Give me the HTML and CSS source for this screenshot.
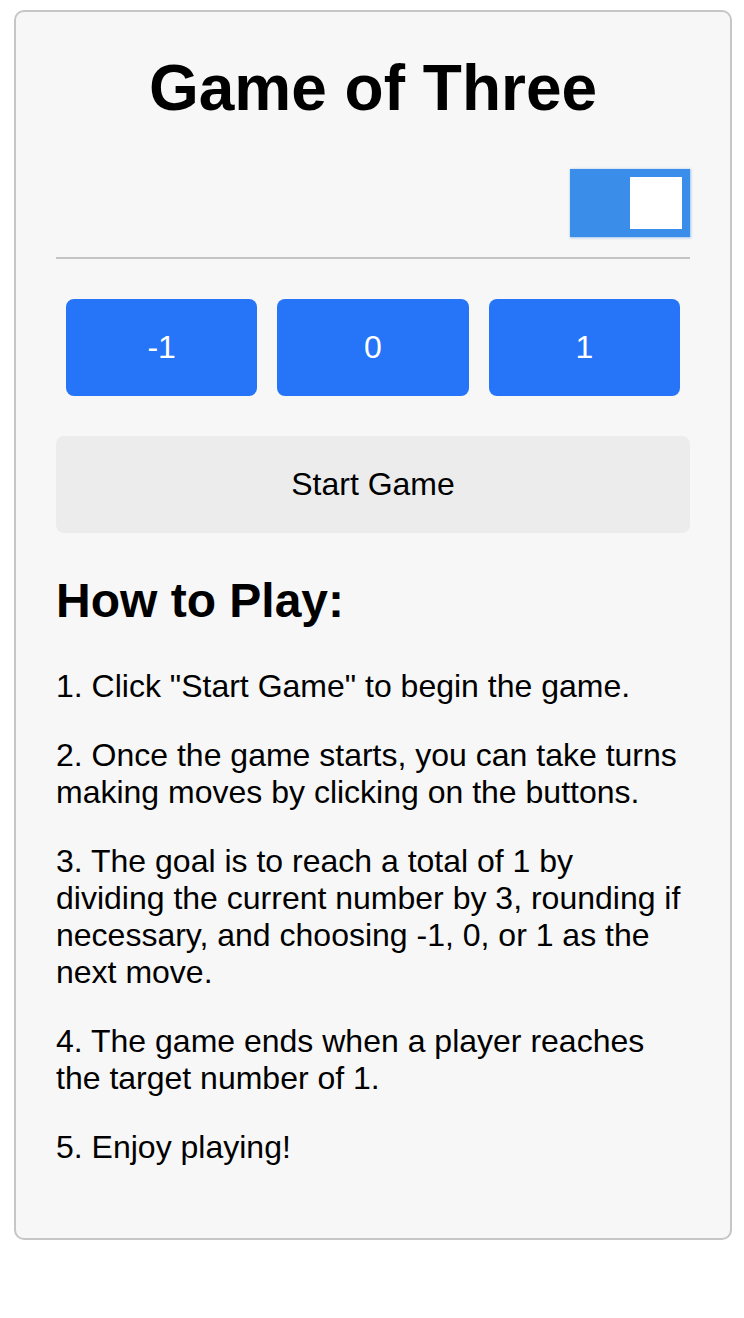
FILE: index.html
```html
<!DOCTYPE html>
<html lang="en">
<head>
<meta charset="utf-8">
<title>Game of Three</title>
<link rel="stylesheet" href="styles.css">
</head>
<body>
<div class="card">
  <h1 class="title">Game of Three</h1>
  <div class="toggle-row">
    <div class="toggle"><span class="knob"></span></div>
  </div>
  <hr class="divider">
  <div class="moves">
    <button class="move">-1</button>
    <button class="move">0</button>
    <button class="move">1</button>
  </div>
  <button class="start">Start Game</button>
  <h2 class="howto">How to Play:</h2>
  <p class="rule">1. Click "Start Game" to begin the game.</p>
  <p class="rule">2. Once the game starts, you can take turns making moves by clicking on the buttons.</p>
  <p class="rule">3. The goal is to reach a total of 1 by dividing the current number by 3, rounding if necessary, and choosing -1, 0, or 1 as the next move.</p>
  <p class="rule">4. The game ends when a player reaches the target number of 1.</p>
  <p class="rule">5. Enjoy playing!</p>
</div>
</body>
</html>
```
FILE: styles.css
```css
html, body {
  margin: 0;
  padding: 0;
  background: #ffffff;
}
body {
  font-family: "Liberation Sans", Arial, sans-serif;
  font-size: 32px;
  color: #000;
}
.card {
  margin: 10px 12px 0 14px;
  border: 2px solid #c6c6c6;
  border-radius: 10px;
  background: #f7f7f7;
  padding: 39px 40px 40px;
}
.title {
  margin: 0;
  font-size: 64px;
  font-weight: bold;
  text-align: center;
}
.toggle-row {
  display: flex;
  justify-content: flex-end;
  margin-top: 44px;
}
.toggle {
  width: 120px;
  height: 68px;
  background: #3a8eea;
  box-shadow: 0 0 2px 0.5px rgba(58, 142, 234, 0.45);
  display: flex;
  justify-content: flex-end;
  align-items: flex-start;
  padding: 8px;
  box-sizing: border-box;
}
.knob {
  width: 52px;
  height: 52px;
  background: #ffffff;
}
.divider {
  margin: 20px 0 0;
  border: 0;
  height: 2px;
  background: #c4c4c4;
}
.moves {
  display: flex;
  gap: 20px;
  padding: 0 10px;
  margin-top: 40px;
}
.move {
  flex: 1;
  border: 0;
  border-radius: 8px;
  background: #2674f8;
  color: #fff;
  font-family: inherit;
  font-size: 32px;
  line-height: 37px;
  padding: 30px 0;
}
.start {
  display: block;
  width: 100%;
  margin-top: 40px;
  border: 0;
  border-radius: 8px;
  background: #ececec;
  color: #000;
  font-family: inherit;
  font-size: 32px;
  line-height: 37px;
  padding: 30px 0;
}
.howto {
  font-size: 48px;
  font-weight: bold;
  margin: 40px 0;
}
.rule {
  margin: 32px 0;
  line-height: 37px;
}
```
